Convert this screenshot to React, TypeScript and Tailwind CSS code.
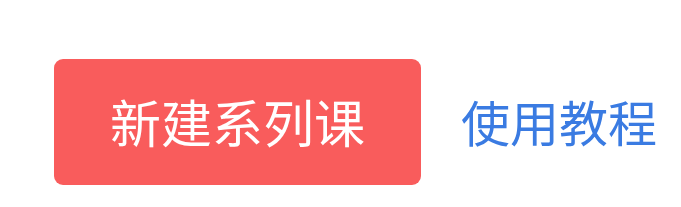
import React from "react";

export default function App() {
  return (
    <div
      className="w-[681px] h-[207px] bg-white flex items-start pl-[54px] pt-[59px]"
      style={{ fontFamily: '"Noto Sans CJK SC", "Noto Sans", sans-serif' }}
    >
      <div className="flex items-center gap-[40px]">
        <button className="w-[367px] h-[126px] rounded-[9px] bg-[#f95c5c] text-white text-[51px] leading-none flex items-center justify-center pb-[2px]">
          新建系列课
        </button>
        <a className="text-[#3a7be2] text-[49px] leading-none cursor-pointer pb-[4px]">使用教程</a>
      </div>
    </div>
  );
}
